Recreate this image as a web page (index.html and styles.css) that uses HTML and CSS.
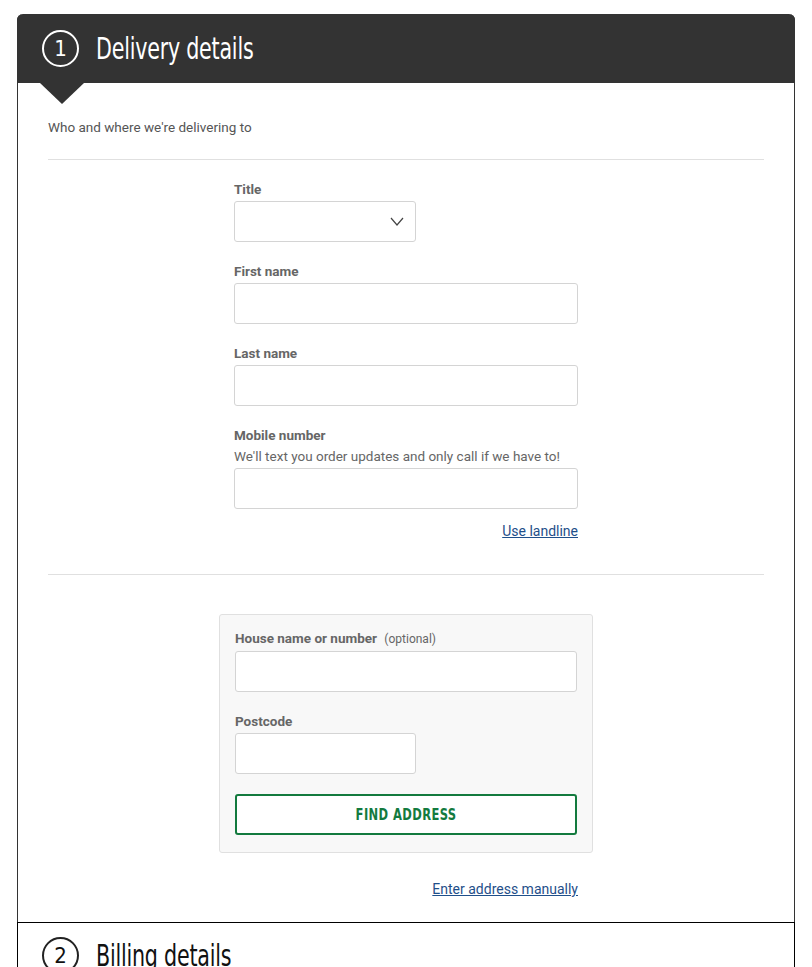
FILE: index.html
```html
<!DOCTYPE html>
<html lang="en">
<head>
<meta charset="utf-8">
<title>Checkout</title>
<link rel="stylesheet" href="styles.css">
</head>
<body>
<div class="page">
  <section class="card">
    <header class="step-head">
      <span class="step-num">1</span>
      <h1 class="step-title">Delivery details</h1>
      <span class="notch"></span>
    </header>
    <div class="step-body">
      <p class="intro">Who and where we're delivering to</p>
      <hr class="rule">
      <div class="form-col">
        <div class="field">
          <label class="label">Title</label>
          <div class="select">
            <svg class="chev" width="14" height="9" viewBox="0 0 14 9"><path d="M1 1 L7 8 L13 1" fill="none" stroke="#444" stroke-width="1.2"/></svg>
          </div>
        </div>
        <div class="field">
          <label class="label">First name</label>
          <div class="input"></div>
        </div>
        <div class="field">
          <label class="label">Last name</label>
          <div class="input"></div>
        </div>
        <div class="field field-last">
          <label class="label">Mobile number</label>
          <p class="hint">We'll text you order updates and only call if we have to!</p>
          <div class="input"></div>
        </div>
        <div class="link-row"><a class="link" href="#">Use landline</a></div>
      </div>
      <hr class="rule rule-2">
      <div class="address-box">
        <div class="field">
          <label class="label">House name or number <span class="opt">(optional)</span></label>
          <div class="input"></div>
        </div>
        <div class="field">
          <label class="label">Postcode</label>
          <div class="input input-short"></div>
        </div>
        <button class="btn"><span class="btn-text">FIND ADDRESS</span></button>
      </div>
      <div class="form-col">
        <div class="link-row link-row-2"><a class="link" href="#">Enter address manually</a></div>
      </div>
    </div>
  </section>
  <section class="card card-2">
    <header class="step-head step-head-light">
      <span class="step-num">2</span>
      <h2 class="step-title">Billing details</h2>
    </header>
  </section>
</div>
</body>
</html>
```

FILE: styles.css
```css
* { box-sizing: border-box; }
html, body { margin: 0; padding: 0; background: #fff; }
body {
  font-family: Roboto, "Liberation Sans", Arial, sans-serif;
  color: #555;
  font-size: 13.5px;
}
.page { padding: 14px 17px 0 17px; }
.card {
  border: 1px solid #333;
  border-top: none;
  border-bottom: none;
  border-radius: 6px 6px 0 0;
  background: #fff;
}
.step-head {
  position: relative;
  height: 69px;
  background: #333;
  margin: 0 -1px;
  border-radius: 6px 6px 0 0;
  display: flex;
  align-items: center;
  padding-left: 25px;
  gap: 17px;
  color: #fff;
}
.step-num {
  flex: none;
  width: 37px;
  height: 37px;
  border: 2px solid #fff;
  border-radius: 50%;
  display: flex;
  align-items: center;
  justify-content: center;
  font-family: "DejaVu Sans Condensed", "DejaVu Sans", sans-serif;
  font-stretch: condensed;
  font-size: 22px;
  line-height: 1;
  padding-top: 1px;
}
.step-title {
  margin: 0;
  font-family: "DejaVu Sans Condensed", "DejaVu Sans", sans-serif;
  font-stretch: condensed;
  font-weight: 500;
  font-size: 31px;
  letter-spacing: -0.3px;
  line-height: 1;
  transform: scaleX(0.74);
  transform-origin: left center;
  white-space: nowrap;
}
.notch {
  position: absolute;
  left: 23px;
  top: 69px;
  width: 0;
  height: 0;
  border-left: 22px solid transparent;
  border-right: 22px solid transparent;
  border-top: 21px solid #333;
}
.step-body { padding: 35px 30px 24px; }
.intro { margin: 0; line-height: 18px; color: #555; }
.rule { border: 0; border-top: 1px solid #e0e0e0; margin: 23px 0 0; }
.form-col { width: 344px; margin: 0 auto; }
.form-col .field:first-child { margin-top: 20px; }
.field { margin-bottom: 20px; }
.field-last { margin-bottom: 0; }
.label {
  display: block;
  font-weight: 700;
  color: #666;
  line-height: 18px;
  margin-bottom: 3px;
}
.opt { font-weight: 400; font-size: 12px; margin-left: 4px; color: #666; }
.hint { margin: 0 0 3px; line-height: 18px; color: #666; }
.input, .select {
  height: 41px;
  border: 1px solid #d4d4d4;
  border-radius: 3px;
  background: #fff;
}
.select {
  width: 182px;
  display: flex;
  align-items: center;
  justify-content: flex-end;
  padding-right: 11px;
}
.input-short { width: 181px; }
.link-row { display: flex; justify-content: flex-end; margin-top: 13px; line-height: 18px; }
.link { color: #1f4f8a; text-decoration: underline; font-size: 14px; }
.rule-2 { margin-top: 34px; }
.address-box {
  width: 374px;
  margin: 39px auto 0;
  background: #f8f8f8;
  border: 1px solid #e0e0e0;
  border-radius: 3px;
  padding: 14px 15px 17px;
}
.address-box .field { margin-bottom: 20px; }
.btn {
  display: block;
  width: 100%;
  height: 41px;
  background: #fff;
  border: 2px solid #137a3e;
  border-radius: 3px;
  color: #137a3e;
  cursor: pointer;
  padding: 0;
}
.btn-text {
  display: inline-block;
  font-family: "DejaVu Sans Condensed", "DejaVu Sans", sans-serif;
  font-stretch: condensed;
  font-weight: 700;
  font-size: 16px;
  letter-spacing: 0.5px;
  transform: scaleX(0.8);
}
.link-row-2 { margin-top: 27px; }
.card-2 {
  border-color: #000;
  border-radius: 0;
  border-top: 1px solid #000;
  height: 60px;
}
.step-head-light {
  background: #fff;
  color: #111;
  height: 64px;
  margin: 0;
  padding-left: 24px;
  border-radius: 0;
}
.step-head-light .step-num { border-color: #222; }
```
